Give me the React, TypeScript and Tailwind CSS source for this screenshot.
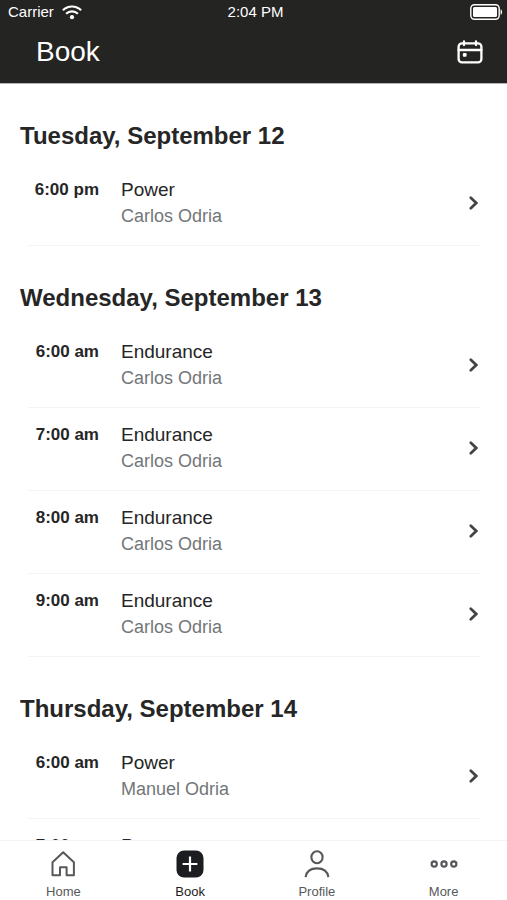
import type { ReactNode } from "react";

type Session = { time: string; title: string; coach: string };
type Day = { name: string; sessions: Session[] };

const days: Day[] = [
  {
    name: "Tuesday, September 12",
    sessions: [{ time: "6:00 pm", title: "Power", coach: "Carlos Odria" }],
  },
  {
    name: "Wednesday, September 13",
    sessions: [
      { time: "6:00 am", title: "Endurance", coach: "Carlos Odria" },
      { time: "7:00 am", title: "Endurance", coach: "Carlos Odria" },
      { time: "8:00 am", title: "Endurance", coach: "Carlos Odria" },
      { time: "9:00 am", title: "Endurance", coach: "Carlos Odria" },
    ],
  },
  {
    name: "Thursday, September 14",
    sessions: [
      { time: "6:00 am", title: "Power", coach: "Manuel Odria" },
      { time: "7:00 am", title: "Power", coach: "Manuel Odria" },
    ],
  },
];

function WifiIcon() {
  return (
    <svg width="20" height="15" viewBox="0 0 20 15" fill="none" stroke="currentColor" strokeWidth="2.2" aria-hidden="true">
      <path d="M0.9 5.3C6 0.2 14 0.2 19.1 5.3" />
      <path d="M4.1 8.8C7.4 5.5 12.6 5.5 15.9 8.8" />
      <circle cx="10" cy="12.2" r="2.1" fill="currentColor" stroke="none" />
    </svg>
  );
}

function BatteryIcon() {
  return (
    <svg width="33" height="16" viewBox="0 0 33 16" fill="none" aria-hidden="true">
      <rect x="0.8" y="0.8" width="28.4" height="14.4" rx="3.6" stroke="currentColor" strokeWidth="1.4" />
      <rect x="3" y="3" width="24" height="10" rx="1.5" fill="currentColor" />
      <path d="M30.6 5.2C32.6 6 32.6 10 30.6 10.8Z" fill="currentColor" />
    </svg>
  );
}

function CalendarIcon() {
  return (
    <svg width="26" height="24" viewBox="0 0 26 24" fill="none" stroke="currentColor" strokeWidth="2.3" strokeLinecap="round" aria-hidden="true">
      <rect x="1.6" y="3.4" width="22.8" height="19" rx="3.4" />
      <path d="M1.6 10H24.4M7 1.4V5M19 1.4V5" />
      <rect x="5.8" y="12.9" width="3.8" height="3.8" rx="1" fill="currentColor" stroke="none" />
    </svg>
  );
}

function ChevronIcon() {
  return (
    <svg width="9" height="14" viewBox="0 0 9 14" fill="none" stroke="currentColor" strokeWidth="2.7" strokeLinecap="round" aria-hidden="true">
      <path d="M1.8 1.8 7.2 7 1.8 12.2" />
    </svg>
  );
}

function HomeIcon() {
  return (
    <svg width="28" height="28" viewBox="0 0 28 28" fill="none" stroke="currentColor" strokeWidth="2" strokeLinejoin="round" aria-hidden="true">
      <path d="M3.5 12.3 14.2 2.3 24.9 12.3V25.3H17.6V17.2H11V25.3H3.5Z" />
    </svg>
  );
}

function BookIcon() {
  return (
    <svg width="28" height="28" viewBox="0 0 28 28" aria-hidden="true">
      <rect x="0.5" y="0.5" width="27" height="27" rx="7.5" fill="currentColor" />
      <path d="M14 6.6V21.4M6.6 14H21.4" stroke="white" strokeWidth="2.2" />
    </svg>
  );
}

function ProfileIcon() {
  return (
    <svg width="28" height="28" viewBox="0 0 28 28" fill="none" stroke="currentColor" strokeWidth="2.1" aria-hidden="true">
      <ellipse cx="14" cy="7.2" rx="5.6" ry="6" />
      <path d="M2.6 27.2C3.4 21.2 7.6 18.4 14 18.4S24.6 21.2 25.4 27.2" />
    </svg>
  );
}

function MoreIcon() {
  return (
    <svg width="28" height="28" viewBox="0 0 28 28" fill="none" stroke="currentColor" strokeWidth="2.2" aria-hidden="true">
      <circle cx="4.2" cy="14" r="2.6" />
      <circle cx="14" cy="14" r="2.6" />
      <circle cx="23.8" cy="14" r="2.6" />
    </svg>
  );
}

function SessionRow({ time, title, coach }: Session) {
  return (
    <li>
      <a href="#session" className="flex h-[83px] items-center border-b border-[#f3f3f3] pr-[3px] pb-[3px]">
        <span className="h-[52px] w-[71px] shrink-0 text-right text-[17px] leading-[26px] font-bold text-[#262626]">{time}</span>
        <span className="ml-[22px] flex h-[52px] flex-1 flex-col leading-[26px]">
          <span className="text-[19px] text-[#262626]">{title}</span>
          <span className="text-[18px] text-[#737679]">{coach}</span>
        </span>
        <span className="text-[#444]">
          <ChevronIcon />
        </span>
      </a>
    </li>
  );
}

function Tab({ label, active = false, children }: { label: string; active?: boolean; children: ReactNode }) {
  return (
    <a
      href={"#" + label.toLowerCase()}
      aria-current={active ? "page" : undefined}
      className={"flex flex-1 flex-col items-center pt-[9px] text-[13px] leading-4 " + (active ? "text-[#1c1d20]" : "text-[#56585b]")}
    >
      {children}
      <span className="mt-1.5">{label}</span>
    </a>
  );
}

export default function App() {
  return (
    <div className="flex h-screen flex-col bg-white font-['Liberation_Sans',Arial,sans-serif]">
      <header className="border-b border-[#b5b5b5] bg-[#242423] text-white">
        <div className="grid grid-cols-3 items-center pr-1 pl-2 text-[15px] leading-6">
          <div className="flex items-center gap-2">
            <span>Carrier</span>
            <WifiIcon />
          </div>
          <span className="text-center">2:04 PM</span>
          <div className="flex justify-end">
            <BatteryIcon />
          </div>
        </div>
        <div className="flex h-[59px] items-center justify-between pr-6 pb-1 pl-9">
          <h1 className="text-[28px] leading-8">Book</h1>
          <button type="button" aria-label="Open calendar">
            <CalendarIcon />
          </button>
        </div>
      </header>
      <main className="min-h-0 flex-1 overflow-y-auto [scrollbar-width:none]">
        {days.map((day) => (
          <section key={day.name}>
            <h2 className="px-5 pt-9 pb-[11px] text-[24px] leading-8 font-bold text-[#262626]">{day.name}</h2>
            <ul className="pr-[26px] pl-7">
              {day.sessions.map((session) => (
                <SessionRow key={session.time} {...session} />
              ))}
            </ul>
          </section>
        ))}
      </main>
      <nav className="flex h-[60px] shrink-0 border-t border-[#f3f3f3] bg-white">
        <Tab label="Home">
          <HomeIcon />
        </Tab>
        <Tab label="Book" active>
          <BookIcon />
        </Tab>
        <Tab label="Profile">
          <ProfileIcon />
        </Tab>
        <Tab label="More">
          <MoreIcon />
        </Tab>
      </nav>
    </div>
  );
}
